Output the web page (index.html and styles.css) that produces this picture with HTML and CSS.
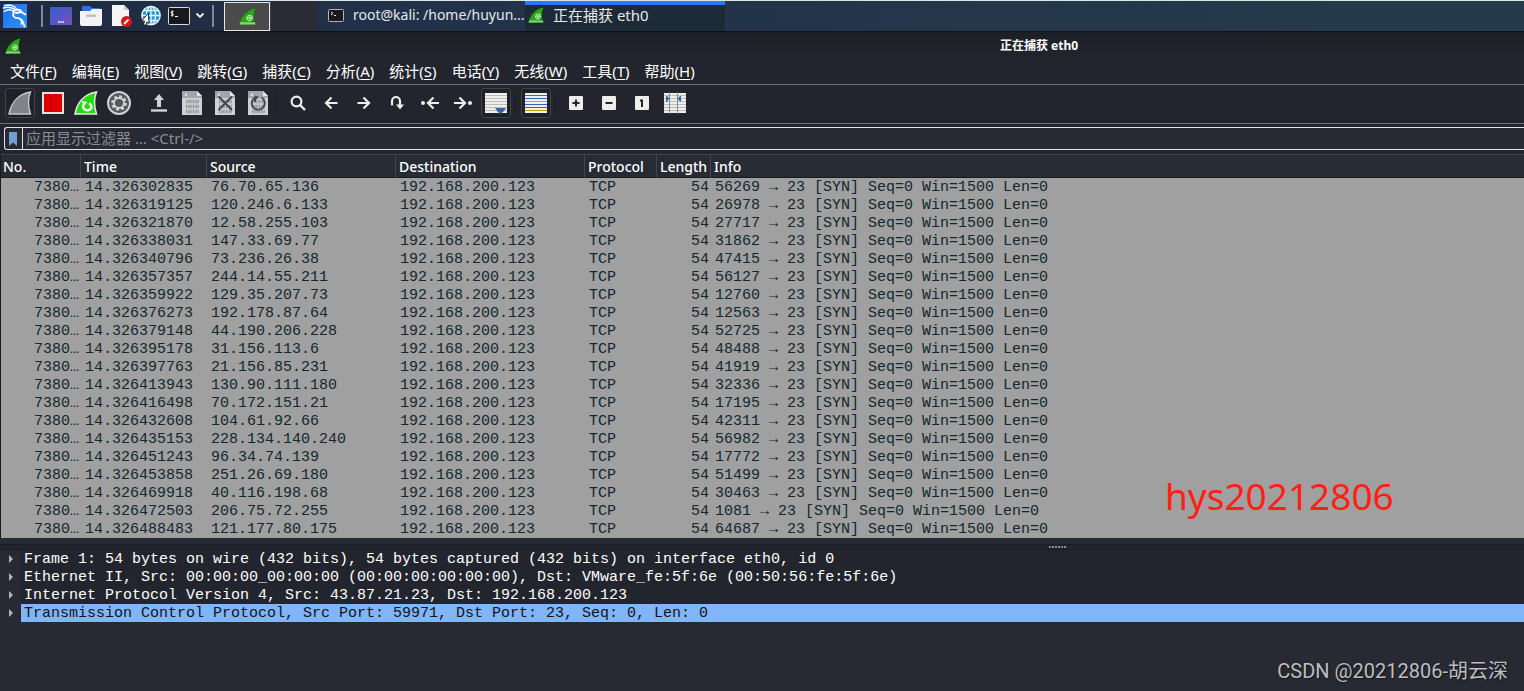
FILE: index.html
```html
<!DOCTYPE html>
<html lang="zh-CN">
<head>
<meta charset="utf-8">
<title>正在捕获 eth0</title>
<link rel="stylesheet" href="styles.css">
</head>
<body>
<svg class="defs" aria-hidden="true">
  <defs>
    <linearGradient id="finGreen" x1="0" y1="0" x2="1" y2="1"><stop offset="0" stop-color="#1f8f12"/><stop offset="0.6" stop-color="#27b015"/><stop offset="1" stop-color="#0f6a0a"/></linearGradient>
    <linearGradient id="kaliBlue" x1="0" y1="0" x2="1" y2="1"><stop offset="0" stop-color="#1f6fe0"/><stop offset="1" stop-color="#2a93ff"/></linearGradient>
    <linearGradient id="desk" x1="0" y1="0" x2="1" y2="1"><stop offset="0" stop-color="#2f5fd0"/><stop offset="1" stop-color="#7a50b8"/></linearGradient>
    <symbol id="fin" viewBox="0 0 16 16">
      <path d="M0.5 15.5C2 8.500 7 2 15.500 0.500C13 5 13.500 10 15.500 15.500Z" fill="url(#finGreen)"/>
      <path d="M0.500 15.500L1.300 13.500H15L15.500 15.500Z" fill="#8ad37d"/>
      <circle cx="10" cy="9.500" r="2.300" fill="none" stroke="#cfeec9" stroke-width="1.600" stroke-dasharray="1.300 0.500"/>
      <circle cx="10" cy="9.500" r="1" fill="#e6f7e2"/>
    </symbol>
    <symbol id="sheet" viewBox="0 0 20 24">
      <path d="M0 0H15L20 5V24H0Z" fill="#cfd1d3"/>
      <path d="M0 0H15V5H20V7H0Z" fill="#a2a6aa"/><path d="M2 5L5 1V5Z" fill="#d8dadc"/><path d="M15 0L20 5H15Z" fill="#e4e5e6"/>
      <path d="M4 10.500H17M4 15.500H17M4 20.500H17" stroke="#8b9095" stroke-width="3.400" stroke-dasharray="1.300 0.700 0.700 0.700"/>
    </symbol>
    <symbol id="arrow" viewBox="0 0 14 14"><path d="M13.500 7H2M7.500 1.500L2 7L7.500 12.500" fill="none" stroke="#eeeeec" stroke-width="2.200"/></symbol>
  </defs>
</svg>

<header class="taskbar">
  <button class="kali" aria-label="Applications">
    <svg width="24" height="24" viewBox="0 0 24 24"><rect width="24" height="24" fill="url(#kaliBlue)"/><g fill="none" stroke="#fff" stroke-linecap="round"><path d="M0.500 4C5 2.500 9 3 13 6M2 1.500C7 0 12 2 14.500 6M1 7.500C5 5 9 5.500 11.500 8" stroke-width="1.400"/><path d="M11 7C14 4.500 17.500 5.500 19 8.500L22.500 10.500M18 8L13 9" stroke-width="1.800"/><path d="M11 7.500C8.500 12 11.500 14 15 14.200C19 14.500 20.500 17.500 21.500 22.500M16 14.300C19 16 19 18.500 18.500 20" stroke-width="1.700"/></g></svg>
  </button>
  <span class="divider"></span>
  <nav class="launchers" aria-label="Launchers">
    <button aria-label="Desktop"><svg width="22" height="18" viewBox="0 0 22 18"><rect width="22" height="18" fill="url(#desk)"/><path d="M8 15H14" stroke="#fff" stroke-width="1.600" stroke-dasharray="1.500 0.700"/></svg></button>
    <button aria-label="Files"><svg width="22" height="20" viewBox="0 0 22 20"><path d="M2 1Q2 0 3 0H10L12 2H20V8H2Z" fill="#2f70df"/><path d="M0 5H10L12 3H22V18Q22 20 20 20H2Q0 20 0 18Z" fill="#f3f3f3"/><rect x="6" y="8.500" width="10" height="2.400" rx="1.200" fill="#bdbdbd"/></svg></button>
    <button aria-label="Text editor"><svg width="22" height="22" viewBox="0 0 22 22"><path d="M2 0H14L19 5V21H2Z" fill="#f5f5f5"/><path d="M14 0L19 5H14Z" fill="#c9c9c9"/><circle cx="16.500" cy="16.500" r="5.500" fill="#d3181d"/><path d="M14 19L18.500 14.500" stroke="#fff" stroke-width="1.800"/></svg></button>
    <button aria-label="Web browser"><svg width="20" height="22" viewBox="1 0 20 22"><circle cx="12" cy="10.500" r="9.500" fill="#2b97d5"/><g fill="none" stroke="#e6f7fb" stroke-width="1.300"><circle cx="12" cy="10.500" r="9.200"/><ellipse cx="12" cy="10.500" rx="4.500" ry="9.200"/><path d="M12 1V20M3 10.500H21M4.500 5.500H19.500M4.500 15.500H19.500"/></g><path d="M9.500 8L2.500 16L5.500 16L4.500 19.500L6.500 20.500L8 17L10 18.500Z" fill="#fff" stroke="#152030"/></svg></button>
    <button aria-label="Terminal"><svg width="22" height="18" viewBox="0 0 22 18"><rect x="0.500" y="0.500" width="21" height="17" rx="1" fill="#17191c" stroke="#d8d8d8"/><path d="M5.500 4.500Q3 4 3 5.500Q3 6.500 4.200 6.500Q5.500 6.800 5.400 7.800Q5 9 3 8.500M4.200 3.500V9.500M7 9.500H10" fill="none" stroke="#fff"/></svg></button>
  </nav>
  <button class="more" aria-label="More terminals"><svg width="10" height="8" viewBox="0 0 10 8"><path d="M1.500 1.500L5 5L8.500 1.500" fill="none" stroke="#f2f2f2" stroke-width="1.800"/></svg></button>
  <span class="divider"></span>
  <button class="workspace" aria-label="Workspace 1"><svg width="17" height="17"><use href="#fin"/></svg></button>
  <span class="workspace-empty"></span>
  <button class="task"><svg width="16" height="13" viewBox="0 0 16 13"><rect x="0.500" y="0.500" width="15" height="12" rx="1" fill="#16181b" stroke="#b5b5b5"/><path d="M3 3L5 4.500L3 6M6 6.500H8" fill="none" stroke="#eee"/></svg><span>root@kali: /home/huyun...</span></button>
  <button class="task active"><svg width="16" height="16"><use href="#fin"/></svg><span>正在捕获 eth0</span></button>
</header>

<main class="window">
  <div class="titlebar"><svg width="16" height="16"><use href="#fin"/></svg><h1>正在捕获 eth0</h1></div>
  <nav class="menubar">
    <button>文件(<u>F</u>)</button><button>编辑(<u>E</u>)</button><button>视图(<u>V</u>)</button><button>跳转(<u>G</u>)</button><button>捕获(<u>C</u>)</button><button>分析(<u>A</u>)</button><button>统计(<u>S</u>)</button><button>电话(<u>Y</u>)</button><button>无线(<u>W</u>)</button><button>工具(<u>T</u>)</button><button>帮助(<u>H</u>)</button>
  </nav>

  <div class="toolbar" role="toolbar">
    <button class="framed" aria-label="Start"><svg width="24" height="24" viewBox="0 0 24 24"><path d="M1 23C3 12 10 3 22.500 1C19.500 8 20 15 22.500 23Z" fill="#808489" stroke="#c6c8ca" stroke-width="1.400"/></svg></button>
    <button aria-label="Stop"><svg width="22" height="22" viewBox="0 0 22 22"><rect width="22" height="22" fill="#e6e2dc"/><rect x="2" y="2" width="18" height="18" fill="#dd0000"/></svg></button>
    <button aria-label="Restart"><svg width="24" height="24" viewBox="0 0 24 24"><path d="M1 23C3 12 10 3 22.500 1C19.500 8 20 15 22.500 23Z" fill="#22dd10" stroke="#e9ebe7" stroke-width="1.500"/><path d="M9 13.500V16A4.500 4.500 0 0 0 17.500 16.500A4 4 0 0 0 15 12.500" fill="none" stroke="#fff" stroke-width="2.200"/><path d="M7.500 10L13.500 11L10 15Z" fill="#fff"/></svg></button>
    <button aria-label="Options"><svg width="24" height="24" viewBox="0 0 24 24"><circle cx="12" cy="12" r="11" fill="#55595e" stroke="#cfd1d3" stroke-width="2"/><circle cx="12" cy="12" r="6.600" fill="none" stroke="#d5d7d8" stroke-width="2.400" stroke-dasharray="2.800 2.380"/><circle cx="12" cy="12" r="5" fill="#55595e" stroke="#d5d7d8" stroke-width="1.800"/></svg></button>
    <span class="sep"></span>
    <button aria-label="Open"><svg width="16" height="18" viewBox="0 0 16 18"><path d="M8 0L13 6H10V13H6V6H3Z" fill="#cfd1d4"/><path d="M0 16.500H16" stroke="#cfd1d4" stroke-width="2.400"/></svg></button>
    <button aria-label="Save"><svg width="20" height="24"><use href="#sheet"/></svg></button>
    <button aria-label="Close"><svg width="20" height="24" viewBox="0 0 20 24"><use href="#sheet"/><path d="M3.500 5.500L17 19M17 5.500L3.500 19" stroke="#42474d" stroke-width="2"/></svg></button>
    <button aria-label="Reload"><svg width="20" height="24" viewBox="0 0 20 24"><use href="#sheet"/><path d="M13.500 6.500A6.500 6.500 0 1 1 7 6.500V11" fill="none" stroke="#42474d" stroke-width="1.900"/><path d="M7 4.500L11 6L7.500 9Z" fill="#42474d"/></svg></button>
    <span class="sep"></span>
    <button aria-label="Find"><svg width="16" height="16" viewBox="0 0 16 16"><circle cx="6.500" cy="6.500" r="4.900" fill="none" stroke="#eeeeec" stroke-width="2.200"/><path d="M10 10L15 15" stroke="#eeeeec" stroke-width="2.400"/></svg></button>
    <button aria-label="Back"><svg width="14" height="14"><use href="#arrow"/></svg></button>
    <button aria-label="Forward"><svg class="flip" width="14" height="14"><use href="#arrow"/></svg></button>
    <button aria-label="Go to packet"><svg width="14" height="16" viewBox="0 0 14 16"><path d="M2 10.500V6A4 4 0 0 1 10 6V10" fill="none" stroke="#eeeeec" stroke-width="2.200"/><path d="M6 9.500H14L10 14.500Z" fill="#eeeeec"/></svg></button>
    <button aria-label="First packet"><svg width="18" height="14" viewBox="0 0 18 14"><circle cx="2" cy="7" r="2" fill="#eeeeec"/><path d="M18 7H7M12.500 1.500L7 7L12.500 12.500" fill="none" stroke="#eeeeec" stroke-width="2.200"/></svg></button>
    <button aria-label="Last packet"><svg class="flip" width="18" height="14" viewBox="0 0 18 14"><circle cx="2" cy="7" r="2" fill="#eeeeec"/><path d="M18 7H7M12.500 1.500L7 7L12.500 12.500" fill="none" stroke="#eeeeec" stroke-width="2.200"/></svg></button>
    <button class="framed" aria-label="Auto scroll"><svg width="22" height="20" viewBox="0 0 22 20"><rect width="22" height="20" fill="#eeeeec"/><path d="M0 2.500H22M0 5.500H22M0 8.500H22M0 11.500H22M0 14.500H22M0 17.500H22" stroke="#babdb6"/><path d="M10 15H21L18.500 18.500L15.500 21L12.500 18.500Z" fill="#3465a4"/></svg></button>
    <span class="sep"></span>
    <button class="framed" aria-label="Colorize"><svg width="22" height="20" viewBox="0 0 22 20"><rect width="22" height="20" fill="#eeeeec"/><path d="M0 2.500H22" stroke="#ef2929"/><path d="M0 5.500H22M0 11.500H22" stroke="#3465a4"/><path d="M0 8.500H22" stroke="#73d216"/><path d="M0 14.500H22" stroke="#75507b"/><path d="M0 17.500H22" stroke="#c4a000"/></svg></button>
    <span class="sep"></span>
    <button aria-label="Zoom in"><svg width="14" height="14" viewBox="0 0 14 14"><rect width="14" height="14" rx="1" fill="#eeeeec"/><path d="M3.500 7H10.500M7 3.500V10.500" stroke="#23252e" stroke-width="2"/></svg></button>
    <button aria-label="Zoom out"><svg width="14" height="14" viewBox="0 0 14 14"><rect width="14" height="14" rx="1" fill="#eeeeec"/><path d="M3.500 7H10.500" stroke="#23252e" stroke-width="2"/></svg></button>
    <button aria-label="Normal size"><svg width="14" height="14" viewBox="0 0 14 14"><rect width="14" height="14" rx="1" fill="#eeeeec"/><path d="M5 4.500H7V11" fill="none" stroke="#23252e" stroke-width="2"/></svg></button>
    <button aria-label="Resize columns"><svg width="22" height="20" viewBox="0 0 22 20"><rect width="22" height="20" fill="#eeeeec"/><path d="M0 2.500H22M0 5.500H22M0 8.500H22M0 11.500H22M0 14.500H22M0 17.500H22" stroke="#babdb6"/><path d="M5.500 -1V21M13.500 -1V21" stroke="#888a85"/><path d="M2.500 3L5 5.500L2.500 8.500ZM16.500 3L14 5.500L16.500 8.500Z" fill="#3465a4" stroke="#3465a4"/></svg></button>
  </div>

  <form class="filter">
    <button type="button" class="bookmark" aria-label="Bookmarks"><svg width="8" height="14" viewBox="0 0 8 14"><path d="M0 0H8V14L4 10.500L0 14Z" fill="#729fcf"/></svg></button>
    <input type="text" aria-label="应用显示过滤器" placeholder="应用显示过滤器 … &lt;Ctrl-/&gt;">
  </form>

  <table class="packets">
    <colgroup><col class="c-no"><col class="c-time"><col class="c-addr"><col class="c-addr"><col class="c-proto"><col class="c-len"><col></colgroup>
    <thead><tr><th>No.</th><th>Time</th><th>Source</th><th>Destination</th><th>Protocol</th><th>Length</th><th>Info</th></tr></thead>
    <tbody>
      <tr><td>7380…</td><td>14.326302835</td><td>76.70.65.136</td><td>192.168.200.123</td><td>TCP</td><td>54</td><td>56269 → 23 [SYN] Seq=0 Win=1500 Len=0</td></tr>
      <tr><td>7380…</td><td>14.326319125</td><td>120.246.6.133</td><td>192.168.200.123</td><td>TCP</td><td>54</td><td>26978 → 23 [SYN] Seq=0 Win=1500 Len=0</td></tr>
      <tr><td>7380…</td><td>14.326321870</td><td>12.58.255.103</td><td>192.168.200.123</td><td>TCP</td><td>54</td><td>27717 → 23 [SYN] Seq=0 Win=1500 Len=0</td></tr>
      <tr><td>7380…</td><td>14.326338031</td><td>147.33.69.77</td><td>192.168.200.123</td><td>TCP</td><td>54</td><td>31862 → 23 [SYN] Seq=0 Win=1500 Len=0</td></tr>
      <tr><td>7380…</td><td>14.326340796</td><td>73.236.26.38</td><td>192.168.200.123</td><td>TCP</td><td>54</td><td>47415 → 23 [SYN] Seq=0 Win=1500 Len=0</td></tr>
      <tr><td>7380…</td><td>14.326357357</td><td>244.14.55.211</td><td>192.168.200.123</td><td>TCP</td><td>54</td><td>56127 → 23 [SYN] Seq=0 Win=1500 Len=0</td></tr>
      <tr><td>7380…</td><td>14.326359922</td><td>129.35.207.73</td><td>192.168.200.123</td><td>TCP</td><td>54</td><td>12760 → 23 [SYN] Seq=0 Win=1500 Len=0</td></tr>
      <tr><td>7380…</td><td>14.326376273</td><td>192.178.87.64</td><td>192.168.200.123</td><td>TCP</td><td>54</td><td>12563 → 23 [SYN] Seq=0 Win=1500 Len=0</td></tr>
      <tr><td>7380…</td><td>14.326379148</td><td>44.190.206.228</td><td>192.168.200.123</td><td>TCP</td><td>54</td><td>52725 → 23 [SYN] Seq=0 Win=1500 Len=0</td></tr>
      <tr><td>7380…</td><td>14.326395178</td><td>31.156.113.6</td><td>192.168.200.123</td><td>TCP</td><td>54</td><td>48488 → 23 [SYN] Seq=0 Win=1500 Len=0</td></tr>
      <tr><td>7380…</td><td>14.326397763</td><td>21.156.85.231</td><td>192.168.200.123</td><td>TCP</td><td>54</td><td>41919 → 23 [SYN] Seq=0 Win=1500 Len=0</td></tr>
      <tr><td>7380…</td><td>14.326413943</td><td>130.90.111.180</td><td>192.168.200.123</td><td>TCP</td><td>54</td><td>32336 → 23 [SYN] Seq=0 Win=1500 Len=0</td></tr>
      <tr><td>7380…</td><td>14.326416498</td><td>70.172.151.21</td><td>192.168.200.123</td><td>TCP</td><td>54</td><td>17195 → 23 [SYN] Seq=0 Win=1500 Len=0</td></tr>
      <tr><td>7380…</td><td>14.326432608</td><td>104.61.92.66</td><td>192.168.200.123</td><td>TCP</td><td>54</td><td>42311 → 23 [SYN] Seq=0 Win=1500 Len=0</td></tr>
      <tr><td>7380…</td><td>14.326435153</td><td>228.134.140.240</td><td>192.168.200.123</td><td>TCP</td><td>54</td><td>56982 → 23 [SYN] Seq=0 Win=1500 Len=0</td></tr>
      <tr><td>7380…</td><td>14.326451243</td><td>96.34.74.139</td><td>192.168.200.123</td><td>TCP</td><td>54</td><td>17772 → 23 [SYN] Seq=0 Win=1500 Len=0</td></tr>
      <tr><td>7380…</td><td>14.326453858</td><td>251.26.69.180</td><td>192.168.200.123</td><td>TCP</td><td>54</td><td>51499 → 23 [SYN] Seq=0 Win=1500 Len=0</td></tr>
      <tr><td>7380…</td><td>14.326469918</td><td>40.116.198.68</td><td>192.168.200.123</td><td>TCP</td><td>54</td><td>30463 → 23 [SYN] Seq=0 Win=1500 Len=0</td></tr>
      <tr><td>7380…</td><td>14.326472503</td><td>206.75.72.255</td><td>192.168.200.123</td><td>TCP</td><td>54</td><td>1081 → 23 [SYN] Seq=0 Win=1500 Len=0</td></tr>
      <tr><td>7380…</td><td>14.326488483</td><td>121.177.80.175</td><td>192.168.200.123</td><td>TCP</td><td>54</td><td>64687 → 23 [SYN] Seq=0 Win=1500 Len=0</td></tr>
    </tbody>
  </table>

  <div class="splitter"><svg width="17" height="2" viewBox="0 0 17 2"><path d="M0 1H17" stroke="#8b8d92" stroke-width="2" stroke-dasharray="2 1"/></svg></div>

  <ul class="tree">
    <li><button aria-label="Expand"></button><span>Frame 1: 54 bytes on wire (432 bits), 54 bytes captured (432 bits) on interface eth0, id 0</span></li>
    <li><button aria-label="Expand"></button><span>Ethernet II, Src: 00:00:00_00:00:00 (00:00:00:00:00:00), Dst: VMware_fe:5f:6e (00:50:56:fe:5f:6e)</span></li>
    <li><button aria-label="Expand"></button><span>Internet Protocol Version 4, Src: 43.87.21.23, Dst: 192.168.200.123</span></li>
    <li class="selected"><button aria-label="Expand"></button><span>Transmission Control Protocol, Src Port: 59971, Dst Port: 23, Seq: 0, Len: 0</span></li>
  </ul>
</main>
<p class="signature">hys20212806</p>
<p class="credit">CSDN @20212806-胡云深</p>
</body>
</html>
```
FILE: styles.css
```css
* { box-sizing: border-box; }
html { height: 100%; }
body {
  position: relative;
  display: flex;
  flex-direction: column;
  min-height: 100%;
  margin: 0;
  overflow: hidden;
  background: #282a33;
  color: #fff;
  font: 15px/20px "Noto Sans", "Noto Sans CJK SC", sans-serif;
}
button { padding: 0; border: 0; background: none; color: inherit; font: inherit; }
svg { display: block; flex: none; overflow: visible; }
.defs { position: absolute; width: 0; height: 0; }
.flip { transform: scaleX(-1); }

.taskbar {
  display: flex;
  align-items: center;
  height: 32px;
  padding-left: 3px;
  border-top: 1px solid #dce6e4;
  border-bottom: 1px solid #101218;
  background: linear-gradient(90deg, #1f2a40, #22324a 30%, #253b4b);
}
.divider { width: 2px; height: 22px; background: #7f8896; }
.kali { margin-right: 14px; }
.launchers { display: flex; align-items: center; gap: 8px; margin: 0 5px 0 7px; }
.more { margin-right: 7px; }
.workspace {
  display: flex;
  align-items: center;
  justify-content: center;
  width: 46px;
  height: 29px;
  margin-left: 10px;
  border: 1px solid #e8e8e8;
  background: #4b4b4b;
}
.workspace-empty { width: 46px; height: 30px; border-left: 1px solid #3a4355; background: #2b2b36; }
.task {
  display: flex;
  align-items: center;
  gap: 9px;
  width: 209px;
  height: 30px;
  padding: 0 0 2px 12px;
  color: #e6e8ea;
  font-size: 14px;
  white-space: nowrap;
}
.task.active { width: 200px; padding-left: 3px; background: #1d2b38; box-shadow: inset 0 4px #2777ff; font-size: 15px; }

.window { display: flex; flex-direction: column; background: #23252e; }
.titlebar { display: flex; align-items: center; height: 28px; padding-left: 5px; background: linear-gradient(#1d1f27, #23252e); }
.titlebar h1 { margin: 0 0 0 979px; font-size: 12px; line-height: 16px; white-space: nowrap; }
.menubar { display: flex; gap: 15px; height: 25px; padding: 0 0 2px 10px; border-bottom: 1px solid #6d6f76; }
.menubar button { white-space: nowrap; }
.menubar u { text-underline-offset: 2px; }

.toolbar { display: flex; align-items: center; gap: 3px; height: 39px; padding: 0 5px 2px; border-bottom: 1px solid #6d6f76; }
.toolbar button { display: flex; align-items: center; justify-content: center; width: 30px; height: 30px; border-radius: 3px; }
.toolbar .framed { border: 1px solid #41434b; background: #1f2129; }
.sep { width: 4px; height: 20px; border-left: 1px solid #1d1f27; }

.filter { display: flex; height: 23px; margin: 3px 0 4px 4px; border: 1px solid #e4e4e4; border-right: 0; border-radius: 3px 0 0 3px; background: #272934; }
.bookmark { display: flex; align-items: center; justify-content: center; width: 18px; padding-right: 1px; border-right: 1px solid #e4e4e4; }
.filter input { flex: 1; min-width: 0; padding: 0 3px 1px; border: 0; outline: 0; background: none; color: #fff; font: inherit; }
.filter input::placeholder { color: #8b8d92; opacity: 1; }

.packets { width: 100%; border-collapse: separate; border-spacing: 0; border-left: 1px solid #191b20; table-layout: fixed; }
.c-no { width: 80px; }
.c-time { width: 126px; }
.c-addr { width: 189px; }
.c-proto { width: 72px; }
.c-len { width: 54px; }
.packets th {
  height: 24px;
  padding: 1px 0 0 3px;
  border-top: 1px solid #43464d;
  border-right: 1px solid #43464d;
  border-bottom: 1px solid #191b20;
  background: #272b33;
  font-size: 14px;
  font-weight: 500;
  line-height: 21px;
  text-align: left;
}
.packets th:first-child { padding-left: 2px; }
.packets th:last-child { border-right: 0; }
.packets td {
  height: 18px;
  padding: 1px 0 0 4px;
  background: #a0a0a0;
  color: #12272e;
  font: 15px/17px "Liberation Mono", monospace;
  white-space: nowrap;
}
.packets td:first-child, .packets td:nth-child(6) { padding: 1px 2px 0 0; text-align: right; }

.splitter { display: flex; align-items: center; height: 12px; padding: 6px 0 0 1049px; border-bottom: 1px solid #1b1d24; background: linear-gradient(#282a33 6px, #1b1d24 6px, #1b1d24 7px, #23252e 7px); }

.tree { margin: 0; padding: 0; list-style: none; font: 15px/17px "Liberation Mono", monospace; }
.tree li { display: flex; height: 18px; white-space: nowrap; }
.tree button { display: flex; align-items: center; width: 21px; padding-left: 9px; background: #282a33; }
.tree button::before { content: ""; border: 4px solid transparent; border-right: 0; border-left-color: #b5b6b9; }
.tree span { flex: 1; padding: 1px 0 0 3px; }
.tree .selected span { background: #80b5f7; color: #10131a; }

.signature { position: absolute; top: 471px; left: 1165px; margin: 0; color: #ff1e14; font-size: 37px; line-height: 50px; }
.credit { position: absolute; right: 16px; bottom: 6px; margin: 0; color: #bdbec2; font: 20px/28px Roboto, "Noto Sans CJK SC", sans-serif; text-shadow: 1px 1px 1px #14151a; }
```
